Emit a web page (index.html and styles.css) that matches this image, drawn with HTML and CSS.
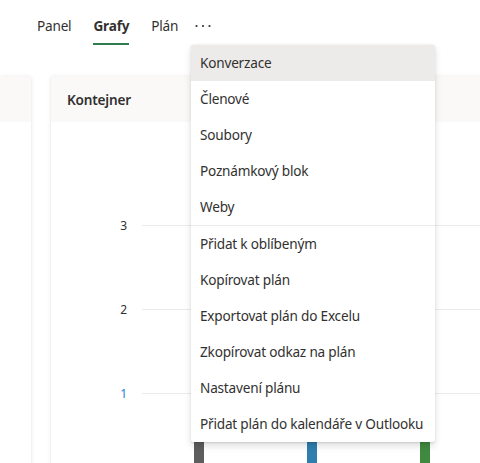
FILE: index.html
```html
<!DOCTYPE html>
<html lang="cs">
<head>
<meta charset="utf-8">
<link rel="stylesheet" href="styles.css">
</head>
<body>
<nav class="tabs">
  <span class="tab">Panel</span>
  <span class="tab active">Grafy</span>
  <span class="tab">Plán</span>
  <span class="more"><svg width="16" height="4" viewBox="0 0 16 4"><circle cx="1.5" cy="2" r="1.1" fill="#323130"/><circle cx="8" cy="2" r="1.1" fill="#323130"/><circle cx="14.5" cy="2" r="1.1" fill="#323130"/></svg></span>
</nav>
<main class="board">
  <section class="card card-left">
    <div class="card-head"></div>
  </section>
  <section class="card card-main">
    <div class="card-head"><h2 class="card-title">Kontejner</h2></div>
    <div class="chart">
      <div class="grid-row"><span class="axis">3</span><span class="line"></span></div>
      <div class="grid-row"><span class="axis">2</span><span class="line"></span></div>
      <div class="grid-row"><span class="axis blue">1</span><span class="line"></span></div>
      <div class="bars">
        <div class="bar-col"><span class="bar bar-grey"></span></div>
        <div class="bar-col"><span class="bar bar-blue"></span></div>
        <div class="bar-col"><span class="bar bar-green"></span></div>
      </div>
    </div>
  </section>
</main>
<ul class="menu">
  <li class="menu-item hover">Konverzace</li>
  <li class="menu-item">Členové</li>
  <li class="menu-item">Soubory</li>
  <li class="menu-item">Poznámkový blok</li>
  <li class="menu-item">Weby</li>
  <li class="divider"></li>
  <li class="menu-item">Přidat k oblíbeným</li>
  <li class="menu-item">Kopírovat plán</li>
  <li class="menu-item">Exportovat plán do Excelu</li>
  <li class="menu-item">Zkopírovat odkaz na plán</li>
  <li class="menu-item">Nastavení plánu</li>
  <li class="menu-item">Přidat plán do kalendáře v Outlooku</li>
</ul>
</body>
</html>
```
FILE: styles.css
```css
html, body {
  margin: 0;
  padding: 0;
  background: #ffffff;
  overflow: hidden;
}
body {
  font-family: "Noto Sans", "Open Sans", sans-serif;
  font-size: 13.6px;
  letter-spacing: -0.2px;
  color: #323130;
  width: 480px;
  height: 463px;
}
.tabs {
  display: flex;
  align-items: flex-start;
  gap: 22px;
  padding-left: 37px;
  height: 52px;
}
.tab {
  line-height: 20px;
  padding: 16px 0 9px;
  color: #323130;
}
.tab.active {
  font-weight: 700;
  border-bottom: 2px solid #2f7d4f;
  padding-bottom: 7px;
}
.more {
  display: flex;
  padding-top: 24px;
  margin-left: -5px;
}
.board {
  display: flex;
  gap: 20px;
  margin-top: 25px;
}
.card {
  background: #ffffff;
  box-shadow: 0 0 5px rgba(0,0,0,0.09), 0 1px 2px rgba(0,0,0,0.05);
  height: 420px;
}
.card-left {
  width: 31px;
  flex: none;
}
.card-main {
  flex: none;
  width: 460px;
}
.card-head {
  background: #faf9f8;
  height: 45px;
  display: flex;
  align-items: center;
}
.card-title {
  margin: 0 0 0 16px;
  font-size: 13.6px;
  font-weight: 600;
  color: #323130;
}
.chart {
  padding-top: 94px;
}
.grid-row {
  display: flex;
  align-items: center;
  height: 18px;
  margin-bottom: 66px;
}
.axis {
  width: 76px;
  text-align: right;
  font-size: 12px;
  letter-spacing: 0;
  color: #323130;
}
.axis.blue {
  color: #2b7cd3;
}
.line {
  flex: 1;
  height: 1px;
  margin-left: 15px;
  background: #edebe9;
}
.bars {
  display: flex;
  margin-left: 91px;
  margin-top: -72px;
}
.bar-col {
  width: 113px;
  display: flex;
  justify-content: center;
}
.bar {
  display: block;
  width: 10px;
  height: 90px;
}
.bar-grey { background: #5e5e5e; }
.bar-blue { background: #2e7fae; }
.bar-green { background: #408a40; }
.menu {
  position: absolute;
  left: 191px;
  top: 45px;
  width: 244px;
  margin: 0;
  padding: 0;
  list-style: none;
  background: #ffffff;
  border-radius: 2px;
  box-shadow: 0 3.2px 7.2px rgba(0,0,0,0.13), 0 0.6px 1.8px rgba(0,0,0,0.11);
  overflow: hidden;
}
.menu-item {
  height: 36px;
  line-height: 36px;
  padding-left: 9px;
  white-space: nowrap;
  color: #323130;
}
.menu-item.hover {
  background: #edebe9;
}
.divider {
  height: 1px;
  background: #edebe9;
}
```
